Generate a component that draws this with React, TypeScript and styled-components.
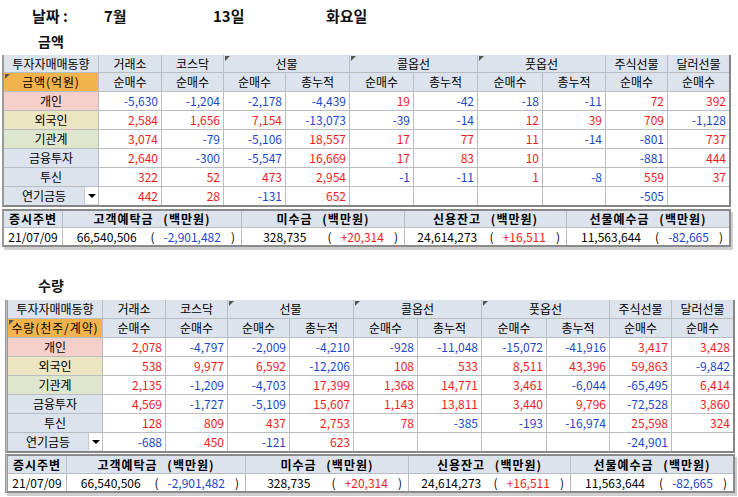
import styled, { createGlobalStyle, css } from 'styled-components';

const GlobalStyle = createGlobalStyle`
  html, body {
    margin: 0;
    padding: 0;
    background: #ffffff;
  }
  body {
    font-family: 'Noto Sans CJK KR', 'Noto Sans', sans-serif;
    font-size: 12px;
    color: #000000;
  }
`;

const COLS = [94, 62, 61, 61, 63, 63, 63, 64, 62, 61, 61];
const SUM_COLS = [58, 178, 162, 161, 162];

const RED = '#ee1c1c';
const BLUE = '#1c48c8';
const HEAD_BG = '#dce3ec';

type Row = { label: string; bg: string; values: string[]; dropdown?: boolean };
type Summary = { value: string; change: string };

const amountRows: Row[] = [
  { label: '개인', bg: '#f5d0ca', values: ['-5,630', '-1,204', '-2,178', '-4,439', '19', '-42', '-18', '-11', '72', '392'] },
  { label: '외국인', bg: '#ece5c2', values: ['2,584', '1,656', '7,154', '-13,073', '-39', '-14', '12', '39', '709', '-1,128'] },
  { label: '기관계', bg: '#dee6cd', values: ['3,074', '-79', '-5,106', '18,557', '17', '77', '11', '-14', '-801', '737'] },
  { label: '금융투자', bg: HEAD_BG, values: ['2,640', '-300', '-5,547', '16,669', '17', '83', '10', '', '-881', '444'] },
  { label: '투신', bg: HEAD_BG, values: ['322', '52', '473', '2,954', '-1', '-11', '1', '-8', '559', '37'] },
  { label: '연기금등', bg: HEAD_BG, dropdown: true, values: ['442', '28', '-131', '652', '', '', '', '', '-505', ''] },
];

const volumeRows: Row[] = [
  { label: '개인', bg: '#f5d0ca', values: ['2,078', '-4,797', '-2,009', '-4,210', '-928', '-11,048', '-15,072', '-41,916', '3,417', '3,428'] },
  { label: '외국인', bg: '#ece5c2', values: ['538', '9,977', '6,592', '-12,206', '108', '533', '8,511', '43,396', '59,863', '-9,842'] },
  { label: '기관계', bg: '#dee6cd', values: ['2,135', '-1,209', '-4,703', '17,399', '1,368', '14,771', '3,461', '-6,044', '-65,495', '6,414'] },
  { label: '금융투자', bg: HEAD_BG, values: ['4,569', '-1,727', '-5,109', '15,607', '1,143', '13,811', '3,440', '9,796', '-72,528', '3,860'] },
  { label: '투신', bg: HEAD_BG, values: ['128', '809', '437', '2,753', '78', '-385', '-193', '-16,974', '25,598', '324'] },
  { label: '연기금등', bg: HEAD_BG, dropdown: true, values: ['-688', '450', '-121', '623', '', '', '', '', '-24,901', ''] },
];

const summary: Summary[] = [
  { value: '66,540,506', change: '-2,901,482' },
  { value: '328,735', change: '+20,314' },
  { value: '24,614,273', change: '+16,511' },
  { value: '11,563,644', change: '-82,665' },
];
const summaryHeads = ['고객예탁금', '미수금', '신용잔고', '선물예수금'];

const Page = styled.div`
  width: 738px;
  height: 497px;
  overflow: hidden;
`;

const DateRow = styled.div`
  display: flex;
  padding: 8px 0 0 32px;
  height: 16px;
  line-height: 16px;
  font-size: 15px;
  font-weight: 700;
  color: #111111;
`;

const DateItem = styled.span<{ $w: number }>`
  width: ${(p) => p.$w}px;
  white-space: nowrap;
`;

const Title = styled.div<{ $top: number }>`
  margin-top: ${(p) => p.$top}px;
  padding-left: 38px;
  height: 17px;
  line-height: 17px;
  font-size: 14px;
  font-weight: 700;
  color: #111111;
`;

const frameBorder = css<{ $double?: boolean }>`
  border-left: ${(p) => (p.$double ? '3px double #9a9a9a' : '2px solid #9a9a9a')};
`;

const Grid = styled.div<{ $left: number; $top: number; $headH: number; $double?: boolean }>`
  margin: ${(p) => p.$top}px 0 0 ${(p) => p.$left}px;
  width: fit-content;
  display: grid;
  grid-template-columns: ${COLS.map((c) => `${c}px`).join(' ')};
  grid-template-rows: ${(p) => p.$headH}px 18px repeat(6, 18px);
  gap: 1px;
  background: #b9bcc0;
  ${frameBorder};
  border-right: 2px solid #858585;
  border-bottom: 2px solid #858585;
`;

const Cell = styled.div<{ $span?: number; $bg?: string; $mark?: boolean; $wide?: boolean }>`
  position: relative;
  grid-column: span ${(p) => p.$span ?? 1};
  display: flex;
  align-items: center;
  justify-content: center;
  background: ${(p) => p.$bg ?? HEAD_BG};
  line-height: 1;
  white-space: nowrap;
  letter-spacing: ${(p) => (p.$wide ? '0.9px' : '0')};
  ${(p) =>
    p.$mark &&
    css`
      &::before {
        content: '';
        position: absolute;
        top: 1px;
        left: 1px;
        border-top: 5px solid #555555;
        border-right: 5px solid transparent;
      }
    `}
`;

const NumCell = styled.div<{ $color: string }>`
  display: flex;
  align-items: center;
  justify-content: flex-end;
  padding-right: 3px;
  background: #ffffff;
  color: ${(p) => p.$color};
  line-height: 1;
  white-space: nowrap;
`;

const LabelText = styled.span`
  flex: 1;
  text-align: center;
`;

const DropBox = styled.span`
  width: 13px;
  align-self: stretch;
  margin: 0 0 1px 0;
  background: #ffffff;
  border-left: 1px solid #c8c8c8;
  display: flex;
  align-items: center;
  justify-content: center;

  &::after {
    content: '';
    border-top: 4px solid #000000;
    border-left: 4px solid transparent;
    border-right: 4px solid transparent;
  }
`;

const SumGrid = styled.div<{ $left: number; $top: number; $headH: number; $double?: boolean }>`
  margin: ${(p) => p.$top}px 0 0 ${(p) => p.$left}px;
  width: fit-content;
  display: grid;
  grid-template-columns: ${SUM_COLS.map((c) => `${c}px`).join(' ')};
  grid-template-rows: ${(p) => p.$headH}px 17px;
  gap: 1px;
  background: #b9bcc0;
  border: 2px solid #8a8a8a;
  ${frameBorder};
  box-shadow: 2px 3px 0 #cfcfcf;
`;

const SumHead = styled.div`
  display: flex;
  align-items: center;
  justify-content: center;
  background: ${HEAD_BG};
  font-weight: 700;
  letter-spacing: 1px;
  word-spacing: 6px;
  line-height: 1;
  white-space: nowrap;
`;

const SumCell = styled.div`
  display: flex;
  align-items: center;
  background: #ffffff;
  padding-right: 6px;
  line-height: 1;
  white-space: nowrap;
`;

const SumValue = styled.span`
  flex: 1;
  text-align: center;
`;

const Change = styled.span<{ $color: string }>`
  margin: 0 10px 0 9px;
  color: ${(p) => p.$color};
`;

const DateCell = styled(SumCell)`
  justify-content: center;
  padding-right: 0;
`;

const colorOf = (v: string) => (v.startsWith('-') ? BLUE : RED);

type SectionProps = {
  unit: string;
  rows: Row[];
  left: number;
  top: number;
  headH: number;
  sumHeadH: number;
  sumTop: number;
  double?: boolean;
};

const Section = ({ unit, rows, left, top, headH, sumHeadH, sumTop, double }: SectionProps) => (
  <>
    <Grid $left={left} $top={top} $headH={headH} $double={double}>
      <Cell>투자자매매동향</Cell>
      <Cell>거래소</Cell>
      <Cell>코스닥</Cell>
      <Cell $span={2} $mark>선물</Cell>
      <Cell $span={2} $mark>콜옵선</Cell>
      <Cell $span={2} $mark>풋옵선</Cell>
      <Cell>주식선물</Cell>
      <Cell>달러선물</Cell>

      <Cell $bg="#f2b34c" $mark $wide>{unit}</Cell>
      {['순매수', '순매수', '순매수', '총누적', '순매수', '총누적', '순매수', '총누적', '순매수', '순매수'].map((h, i) => (
        <Cell key={i}>{h}</Cell>
      ))}

      {rows.map((r) => [
        <Cell key={r.label} $bg={r.bg}>
          <LabelText>{r.label}</LabelText>
          {r.dropdown && <DropBox />}
        </Cell>,
        ...r.values.map((v, i) => (
          <NumCell key={`${r.label}-${i}`} $color={colorOf(v)}>
            {v}
          </NumCell>
        )),
      ])}
    </Grid>

    <SumGrid $left={left} $top={sumTop} $headH={sumHeadH} $double={double}>
      <SumHead>증시주변</SumHead>
      {summaryHeads.map((h) => (
        <SumHead key={h}>{h} (백만원)</SumHead>
      ))}
      <DateCell>21/07/09</DateCell>
      {summary.map((s) => (
        <SumCell key={s.value}>
          <SumValue>{s.value}</SumValue>
          <span>(</span>
          <Change $color={colorOf(s.change)}>{s.change}</Change>
          <span>)</span>
        </SumCell>
      ))}
    </SumGrid>
  </>
);

const App = () => (
  <Page>
    <GlobalStyle />
    <DateRow>
      <DateItem $w={72}>날짜 :</DateItem>
      <DateItem $w={109}>7월</DateItem>
      <DateItem $w={113}>13일</DateItem>
      <DateItem $w={60}>화요일</DateItem>
    </DateRow>

    <Title $top={9}>금액</Title>
    <Section unit="금액(억원)" rows={amountRows} left={2} top={5} headH={17} sumHeadH={16} sumTop={2} />

    <Title $top={30}>수량</Title>
    <Section unit="수량(천주/계약)" rows={volumeRows} left={5} top={6} headH={18} sumHeadH={17} sumTop={1} double />
  </Page>
);

export default App;
